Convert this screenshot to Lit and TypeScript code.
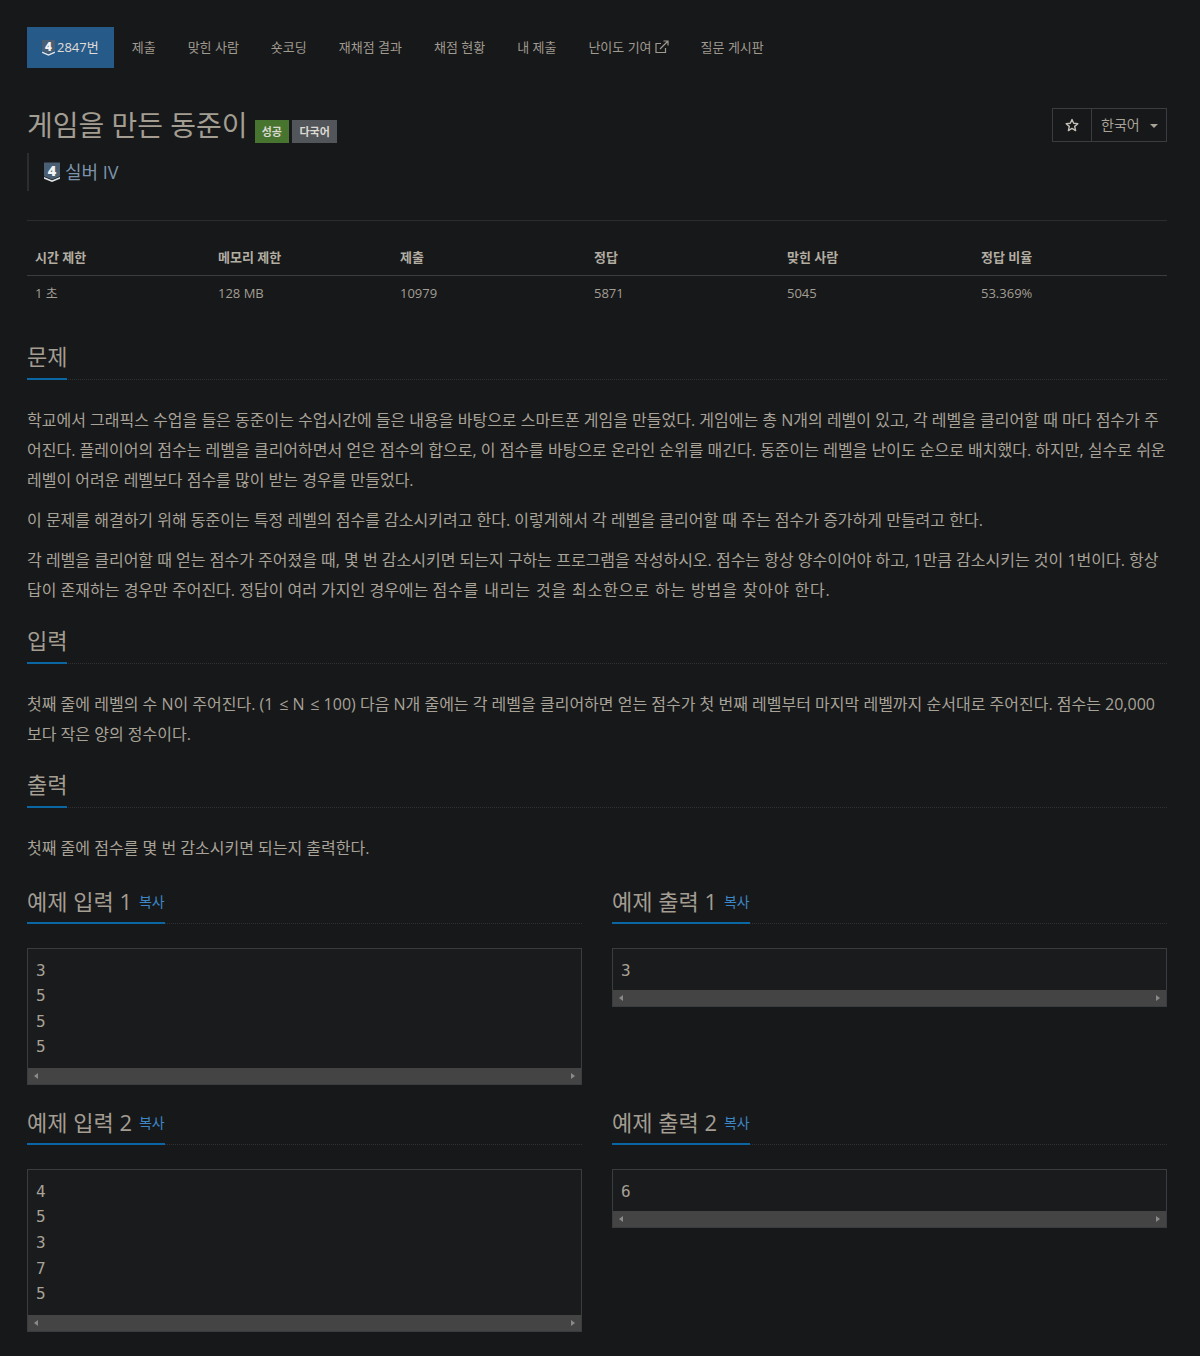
import { LitElement, html, css, svg } from "lit";
import { customElement } from "lit/decorators.js";

const tier = (cls: string) => html`<svg class=${cls} viewBox="0 0 16 20" aria-hidden="true">
  ${svg`<path d="M0 16.2L8 19.6L16 16.2V14.4L8 17.8L0 14.4Z" fill="#e4e7ea"/>
  <path d="M0 0H16V13.8L8 17L0 13.8Z" fill="#4a5f73"/>
  <text x="8" y="13.4" text-anchor="middle" font-family="Open Sans, sans-serif" font-weight="800" font-size="14.5" fill="#f2f3f4">4</text>`}
</svg>`;

const nav = ["제출", "맞힌 사람", "숏코딩", "재채점 결과", "채점 현황", "내 제출"];
const stats = [
  ["시간 제한", "1 초"],
  ["메모리 제한", "128 MB"],
  ["제출", "10979"],
  ["정답", "5871"],
  ["맞힌 사람", "5045"],
  ["정답 비율", "53.369%"],
];
const samples = [
  ["예제 입력 1", "3\n5\n5\n5"],
  ["예제 출력 1", "3"],
  ["예제 입력 2", "4\n5\n3\n7\n5"],
  ["예제 출력 2", "6"],
];

@customElement("app-root")
export class AppRoot extends LitElement {
  static styles = css`
    :host {
      display: block;
      min-height: 1356px;
      background: #16181a;
      color: #a8a297;
      font-family: "Open Sans", "Noto Sans CJK KR", sans-serif;
      font-size: 14px;
      box-sizing: border-box;
      padding: 27px 33px 0 27px;
    }
    * { box-sizing: border-box; }
    .nav { display: flex; height: 41px; }
    .nav a {
      display: flex; align-items: center; padding: 0 16px 2px; font-size: 13px;
      color: #a09a8f; white-space: nowrap;
    }
    .nav a.active { background: #265a88; color: #e0ddd8; padding: 0 15px 2px 15px; gap: 2px; margin-right: 2px; }
    .nav-tier { width: 13px; height: 16px; margin-top: 3px; overflow: visible; }
    .ext { width: 14px; height: 14px; margin: 0 0 0 3px; }
    .title-row { display: flex; justify-content: space-between; margin-top: 40px; }
    h1 { margin: 0; height: 34px; font-size: 28px; line-height: 35px; font-weight: 400; color: #a39d92; display: flex; align-items: flex-start; }
    .badges { display: flex; gap: 3px; margin-left: 7px; margin-top: 12px; }
    .label { height: 23px; font-size: 11px; font-weight: 700; display: flex; align-items: center; color: #dcd9d3; }
    .ok { background: #47752f; padding: 0 7px; }
    .multi { background: #52565a; padding: 0 7.5px; }
    .btns { display: flex; height: 34px; border: 1px solid #3a3d3f; }
    .star { width: 39px; padding-bottom: 1px; display: flex; align-items: center; justify-content: center; border-right: 1px solid #3a3d3f; }
    .star svg { width: 14px; height: 14px; margin-right: 1px; }
    .lang { width: 74px; padding: 0 0 3px 9px; display: flex; align-items: center; font-size: 14px; color: #a8a297; gap: 10px; }
    .caret { border-top: 4px solid #a8a297; border-left: 4px solid transparent; border-right: 4px solid transparent; margin-top: 4px; }
    .tier-row {
      margin-top: 11px; height: 38px; border-left: 2px solid #2b2e30; padding: 0 0 2px 15px;
      display: flex; align-items: center; gap: 5px; font-size: 18px; color: #7c94ab;
    }
    .big-tier { width: 16px; height: 21px; margin-top: 3px; overflow: visible; }
    .rule { height: 1px; background: #2b2e30; margin-top: 29px; }
    table { width: 100%; border-collapse: collapse; table-layout: fixed; margin-top: 18px; font-size: 13px; }
    th { text-align: left; font-weight: 700; height: 36px; padding: 0 8px 1px; border-bottom: 1px solid #3a3d3f; color: #b3ada2; }
    td { height: 36px; padding: 0 8px 1px; color: #a39d92; }
    .c0 { width: 183px; } .c1 { width: 182px; } .c2 { width: 194px; } .c3 { width: 193px; } .c4, .c5 { width: 194px; }
    .head { display: flex; border-bottom: 1px dotted #2f3235; height: 40px; }
    .head h2 {
      margin: 0 0 -1px; height: 40px; border-bottom: 2px solid #0b67a3; font-size: 22px; line-height: 32px;
      font-weight: 400; color: #a39d92; display: flex; white-space: nowrap;
    }
    .section { margin-top: 19px; }
    .section.first { margin-top: 29px; }
    .body { margin-top: 25px; font-size: 16px; line-height: 30px; color: #a8a297; }
    p { margin: 0 0 10px; }
    p:last-child { margin: 0; }
    .wide { letter-spacing: 0.85px; }
    .samples { display: grid; grid-template-columns: 1fr 1fr; column-gap: 30px; align-items: start; margin-top: 22px; row-gap: 21px; }
    .copy { font-size: 14px; color: #3d86c6; margin-left: 7px; line-height: 34px; }
    .sample .head { height: 39px; }
    .sample .head h2 { height: 39px; }
    pre {
      margin: 24px 0 0; border: 1px solid #3a3d3f; background: #191b1d; color: #a8a297;
      font-family: "DejaVu Sans Mono", monospace; font-size: 16px; line-height: 25.6px;
    }
    pre .txt { display: block; padding: 8.6px 8px 6.8px; }
    pre .txt.lines { padding-bottom: 8.2px; }
    .sb { display: flex; align-items: center; justify-content: space-between; height: 16px; background: #444; padding: 0 6px; }
    .al { border-right: 4px solid #8a8a8a; border-top: 3.5px solid transparent; border-bottom: 3.5px solid transparent; }
    .ar { border-left: 4px solid #8a8a8a; border-top: 3.5px solid transparent; border-bottom: 3.5px solid transparent; }
  `;

  private section(title: string, body: unknown, first = false) {
    return html`<section class="section ${first ? "first" : ""}">
      <div class="head"><h2>${title}</h2></div>
      <div class="body">${body}</div>
    </section>`;
  }

  render() {
    return html`
      <nav class="nav">
        <a class="active">${tier("nav-tier")}2847번</a>
        ${nav.map((n) => html`<a>${n}</a>`)}
        <a>난이도 기여<svg class="ext" viewBox="0 0 14 14" fill="none" stroke="#a09a8f" stroke-width="1.2"><path d="M10.5 8V12.5H1V3.5H6"/><path d="M5 9L12.5 1.5M8.5 1H13V5.5" /></svg></a>
        <a>질문 게시판</a>
      </nav>
      <div class="title-row">
        <h1>게임을 만든 동준이
          <span class="badges"><span class="label ok">성공</span><span class="label multi">다국어</span></span>
        </h1>
        <div class="btns">
          <div class="star"><svg viewBox="0 0 24 24" fill="none" stroke="#c4bfb6" stroke-width="2.4" stroke-linejoin="round"><path d="M12 2.5L14.9 9L22 9.7L16.6 14.4L18.2 21.5L12 17.8L5.8 21.5L7.4 14.4L2 9.7L9.1 9Z"/></svg></div>
          <div class="lang">한국어<span class="caret"></span></div>
        </div>
      </div>
      <div class="tier-row">${tier("big-tier")}실버 IV</div>
      <div class="rule"></div>
      <table>
        <thead><tr>${stats.map((s, i) => html`<th class="c${i}">${s[0]}</th>`)}</tr></thead>
        <tbody><tr>${stats.map((s) => html`<td>${s[1]}</td>`)}</tr></tbody>
      </table>
      ${this.section("문제", html`
        <p>학교에서 그래픽스 수업을 들은 동준이는 수업시간에 들은 내용을 바탕으로 스마트폰 게임을 만들었다. 게임에는 총 N개의 레벨이 있고, 각 레벨을 클리어할 때 마다 점수가 주어진다. 플레이어의 점수는 레벨을 클리어하면서 얻은 점수의 합으로, 이 점수를 바탕으로 온라인 순위를 매긴다. 동준이는 레벨을 난이도 순으로 배치했다. 하지만, 실수로 쉬운 레벨이 어려운 레벨보다 점수를 많이 받는 경우를 만들었다.</p>
        <p>이 문제를 해결하기 위해 동준이는 특정 레벨의 점수를 감소시키려고 한다. 이렇게해서 각 레벨을 클리어할 때 주는 점수가 증가하게 만들려고 한다.</p>
        <p>각 레벨을 클리어할 때 얻는 점수가 주어졌을 때, 몇 번 감소시키면 되는지 구하는 프로그램을 작성하시오. 점수는 항상 양수이어야 하고, 1만큼 감소시키는 것이 1번이다. 항상 답이 존재하는 경우만 주어진다. 정답이 여러 가지인 경우에는 <span class="wide">점수를 내리는 것을 최소한으로 하는 방법을 찾아야 한다.</span></p>
      `, true)}
      ${this.section("입력", html`<p>첫째 줄에 레벨의 수 N이 주어진다. (1 \u200A≤ N \u200A≤ 100) 다음 N개 줄에는 각 레벨을 클리어하면 얻는 점수가 첫 번째 레벨부터 마지막 레벨까지 순서대로 주어진다. 점수는 20,000보다 작은 양의 정수이다.</p>`)}
      ${this.section("출력", html`<p>첫째 줄에 점수를 몇 번 감소시키면 되는지 출력한다.</p>`)}
      <div class="samples">
        ${samples.map(([t, v]) => html`<div class="sample">
          <div class="head"><h2>${t}<span class="copy">복사</span></h2></div>
          <pre><span class="txt ${v.length > 1 ? "lines" : ""}">${v}</span><div class="sb"><span class="al"></span><span class="ar"></span></div></pre>
        </div>`)}
      </div>
    `;
  }
}
